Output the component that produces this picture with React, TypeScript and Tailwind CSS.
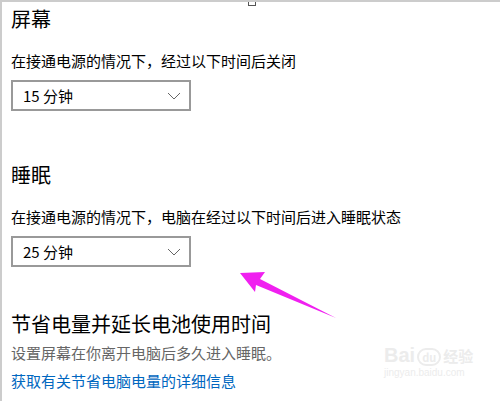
import React from 'react';

const font = { fontFamily: '"Noto Sans CJK SC", "Noto Sans", sans-serif' };

const Select: React.FC<{ value: string }> = ({ value }) => (
  <div className="flex items-center justify-between w-[180px] h-[31px] border-2 border-[#999999] bg-white pl-[10px] pr-[6px]">
    <span className="text-[15px] leading-[20px] text-black">{value}</span>
    <svg width="14" height="8" viewBox="0 0 14 8" className="mr-[2px]">
      <path d="M1 1 L7 7 L13 1" fill="none" stroke="#666666" strokeWidth="1" />
    </svg>
  </div>
);

export default function App() {
  return (
    <div style={font} className="relative w-[500px] h-[401px] bg-white border-t-2 border-l-2 border-[#cccccc] overflow-hidden">
      {/* little marker on the top edge */}
      <div className="absolute top-[-2px] left-[246px] w-[8px] h-[6px] border border-[#555555] bg-white" />

      <div className="flex flex-col pl-[9px] pt-[3px]">
        <h2 className="text-[20px] leading-[28px] text-black">屏幕</h2>
        <p className="mt-[18px] text-[15px] leading-[20px] text-black">在接通电源的情况下，经过以下时间后关闭</p>
        <div className="mt-[9px]">
          <Select value="15 分钟" />
        </div>

        <h2 className="mt-[50px] text-[20px] leading-[28px] text-black">睡眠</h2>
        <p className="mt-[18px] text-[15px] leading-[20px] text-black">在接通电源的情况下，电脑在经过以下时间后进入睡眠状态</p>
        <div className="mt-[9px]">
          <Select value="25 分钟" />
        </div>

        <h2 className="mt-[43px] text-[20px] leading-[28px] text-black">节省电量并延长电池使用时间</h2>
        <p className="mt-[5px] text-[15px] leading-[20px] text-[#666666]">设置屏幕在你离开电脑后多久进入睡眠。</p>
        <a className="mt-[8px] text-[15px] leading-[20px] text-[#0067c0]">获取有关节省电脑电量的详细信息</a>
      </div>

      {/* magenta annotation arrow */}
      <svg className="absolute left-0 top-0" width="500" height="401" viewBox="0 0 500 401">
        <polygon
          points="238,271 263,270 258,277 334,316 254,283 253,290"
          fill="#f020f0"
        />
      </svg>

      {/* faint watermark */}
      <div className="absolute left-[382px] top-[342px] flex flex-col items-start text-[#ececec]">
        <div className="flex items-end gap-[2px]">
          <span className="text-[20px] leading-[22px] font-bold" style={{ fontFamily: '"Liberation Sans", sans-serif' }}>Bai</span>
          <span className="rounded-full border-2 border-[#ececec] px-[3px] text-[11px] leading-[14px] font-bold">du</span>
          <span className="text-[15px] leading-[20px] font-bold">经验</span>
        </div>
        <span className="text-[10px] leading-[14px]" style={{ fontFamily: '"Liberation Sans", sans-serif' }}>jingyan.baidu.com</span>
      </div>
    </div>
  );
}
